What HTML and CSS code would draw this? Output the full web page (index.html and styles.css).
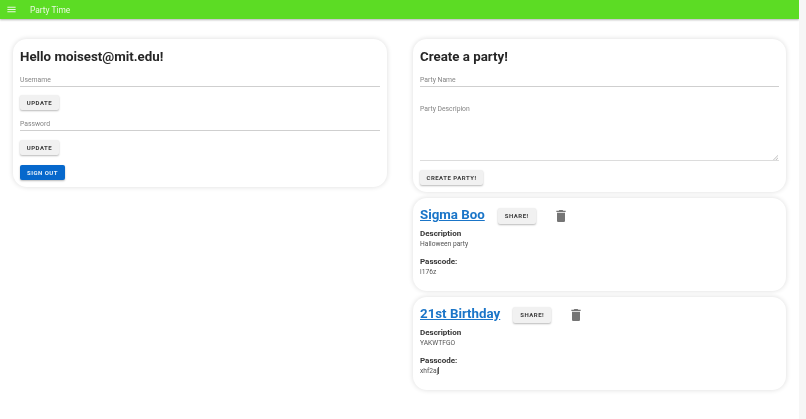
FILE: index.html
```html
<!DOCTYPE html>
<html lang="en">
<head>
<meta charset="utf-8">
<title>Party Time</title>
<link rel="stylesheet" href="styles.css">
</head>
<body>
<div class="page">
  <header class="appbar">
    <svg class="menu" viewBox="0 0 24 24" width="11" height="11"><path d="M3 18h18v-2H3v2zm0-5h18v-2H3v2zm0-7v2h18V6H3z"/></svg>
    <span class="brand">Party Time</span>
  </header>
  <main class="columns">
    <section class="column">
      <div class="card account">
        <h1 class="title">Hello moisest@mit.edu!</h1>
        <div class="field"><span class="label">Username</span></div>
        <button class="btn btn-update">UPDATE</button>
        <div class="field field-second"><span class="label">Password</span></div>
        <button class="btn btn-update btn-update-second">UPDATE</button>
        <button class="btn btn-primary">SIGN OUT</button>
      </div>
    </section>
    <section class="column">
      <div class="card create">
        <h1 class="title">Create a party!</h1>
        <div class="field"><span class="label">Party Name</span></div>
        <div class="field field-area">
          <span class="label">Party Descripion</span>
          <svg class="grip" viewBox="0 0 6 6" width="5" height="5"><path d="M6 0v1L1 6H0zM6 3v1L4 6H3z"/></svg>
        </div>
        <button class="btn btn-create">CREATE PARTY!</button>
      </div>
      <article class="card party">
        <div class="party-head">
          <a class="party-name" href="#">Sigma Boo</a>
          <button class="btn btn-share">SHARE!</button>
          <svg class="trash" viewBox="0 0 24 24" width="16" height="16"><path d="M6 19c0 1.1.9 2 2 2h8c1.100 0 2-.9 2-2V7H6v12zM19 4h-3.500l-1-1h-5l-1 1H5v2h14V4z"/></svg>
        </div>
        <h2 class="term">Description</h2>
        <p class="value">Halloween party</p>
        <h2 class="term term-gap">Passcode:</h2>
        <p class="value">l176z</p>
      </article>
      <article class="card party">
        <div class="party-head">
          <a class="party-name" href="#">21st Birthday</a>
          <button class="btn btn-share">SHARE!</button>
          <svg class="trash" viewBox="0 0 24 24" width="16" height="16"><path d="M6 19c0 1.100.9 2 2 2h8c1.100 0 2-.9 2-2V7H6v12zM19 4h-3.500l-1-1h-5l-1 1H5v2h14V4z"/></svg>
        </div>
        <h2 class="term">Description</h2>
        <p class="value">YAKWTFGO</p>
        <h2 class="term term-gap">Passcode:</h2>
        <p class="value">xhf2aj<span class="caret"></span></p>
      </article>
    </section>
  </main>
</div>
</body>
</html>
```
FILE: styles.css
```css
* { box-sizing: border-box; }
html, body { margin: 0; height: 100%; overflow: hidden; }
body {
  background: #fff;
  font-family: Roboto, "Liberation Sans", sans-serif;
  color: #262626;
  border-right: 7px solid #f6f6f6;
}
.page { width: 799px; filter: blur(.3px); }
.appbar {
  height: 19px;
  background: #5cdc24;
  display: flex;
  align-items: center;
  padding-left: 6px;
  box-shadow: 0 1px 2px rgba(0, 0, 0, .3);
  color: #e9f8e0;
}
.menu { fill: #e9f8e0; }
.brand { margin-left: 13px; font-size: 8.4px; }
.columns {
  display: grid;
  grid-template-columns: 374px 373px;
  column-gap: 26px;
  padding: 20px 0 0 13px;
  align-items: start;
}
.column { display: flex; flex-direction: column; gap: 6px; }
.card {
  background: #fff;
  border-radius: 14px;
  box-shadow: 0 0 4px 1px rgba(0, 0, 0, .1);
  padding: 0 7px;
  display: flex;
  flex-direction: column;
  align-items: flex-start;
}
.account { height: 148px; padding-top: 9px; }
.create { height: 153px; padding-top: 9px; }
.party { height: 93px; padding-top: 8px; }
.title {
  margin: 0;
  font-size: 13.3px;
  line-height: 18px;
  font-weight: 700;
  color: #262626;
}
.field {
  align-self: stretch;
  height: 19px;
  margin-top: 2px;
  padding-bottom: 1px;
  border-bottom: 1px solid #cfcfcf;
  display: flex;
  align-items: flex-end;
}
.field-second { margin-top: 2px; }
.field-area {
  position: relative;
  height: 74px;
  margin-top: 0;
  padding: 18px 0 0;
  align-items: flex-start;
  border-bottom: 1px solid #dcdcdc;
}
.grip { position: absolute; right: 1px; bottom: 0; fill: #aaa; }
.label { font-size: 6.8px; line-height: 9px; color: #858585; }
.btn {
  border: 0;
  border-radius: 2px;
  font-family: inherit;
  font-size: 6px;
  font-weight: 700;
  letter-spacing: .5px;
  height: 15px;
  padding: 0;
  color: #3a3a3a;
  background: #f1f1f1;
  box-shadow: 0 1px 2px rgba(0, 0, 0, .28);
}
.btn-update { width: 39px; margin-top: 8px; }
.btn-update-second { margin-top: 9px; }
.btn-create { width: 63px; margin-top: 9px; }
.btn-share { width: 38px; height: 16px; margin-left: 13px; margin-top: 1px; }
.btn-primary {
  width: 45px;
  margin-top: 10px;
  background: #0668cc;
  color: #e6f0fa;
}
.party-head { display: flex; align-items: center; height: 18px; }
.party-name {
  font-size: 13.3px;
  line-height: 18px;
  font-weight: 700;
  color: #1a75c8;
}
.trash { fill: #757575; margin: 1px 0 0 17px; }
.term {
  margin: 4px 0 0;
  font-size: 8px;
  line-height: 11px;
  font-weight: 700;
  color: #333;
}
.term-gap { margin-top: 6px; }
.value {
  margin: 0;
  font-size: 6.7px;
  line-height: 11px;
  color: #555;
}
.caret {
  display: inline-block;
  width: 1px;
  height: 7px;
  vertical-align: -1px;
  background: #555;
}
```
